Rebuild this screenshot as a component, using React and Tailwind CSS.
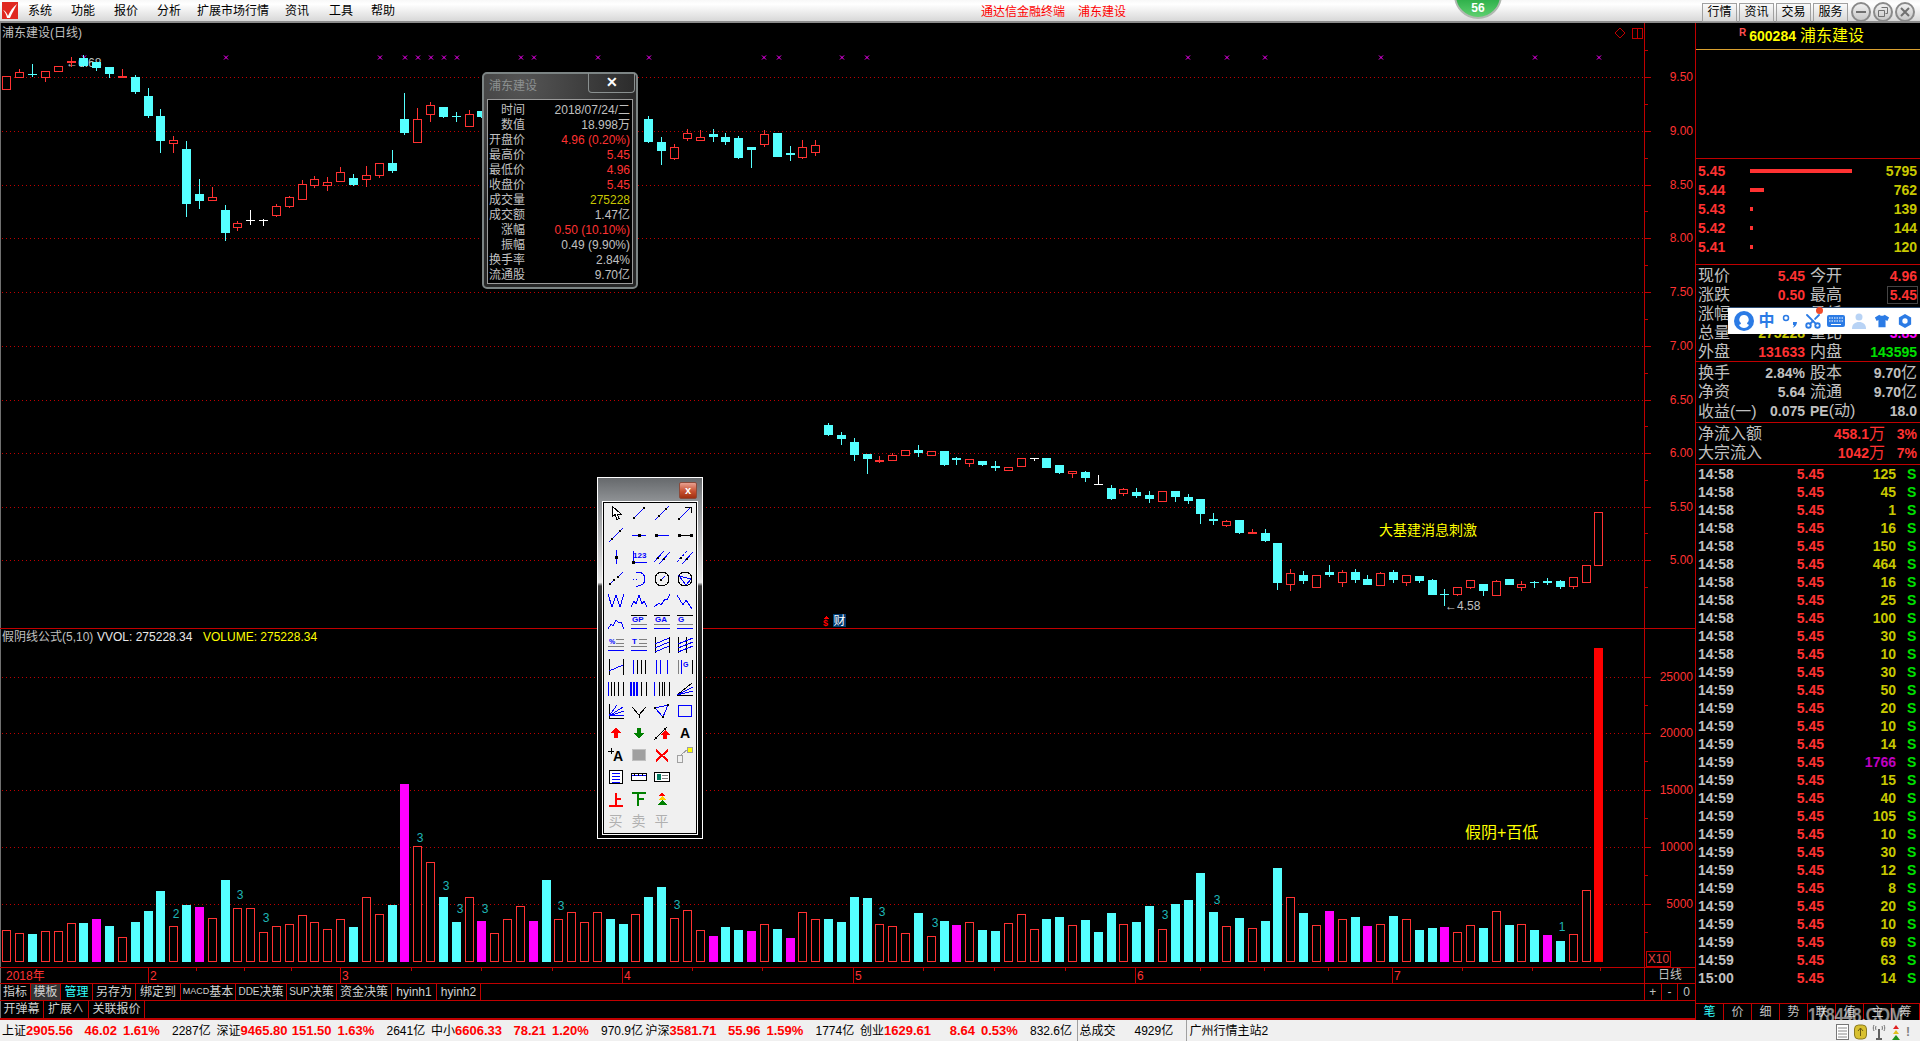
import React from 'react';
import { Scissors } from 'lucide-react';

const RED = '#ff3232';
const CYAN = '#55ffff';
const MAG = '#ff00ff';
const LINE = '#c00000';
const GRAY = '#c0c0c0';
const YEL = '#c8c800';

// candle raw: [type, hi, top, bottom, lo], zoom pixels (y / 3 + offset)
const raw1 = [
  ['r', 229, 229, 266, 266], ['r', 208, 215, 230, 230], ['c', 193, 222, 226, 230], ['r', 212, 212, 230, 245], ['r', 199, 199, 212, 212],
  ['f', 172, 183, 188, 200], ['c', 165, 175, 197, 200], ['c', 186, 186, 204, 212], ['c', 201, 201, 221, 234], ['f', 208, 229, 233, 234],
  ['c', 226, 231, 275, 282], ['c', 264, 288, 348, 353], ['c', 327, 348, 423, 458], ['r', 408, 420, 428, 458], ['c', 423, 447, 611, 650],
  ['c', 537, 582, 602, 627], ['r', 561, 592, 601, 601], ['c', 616, 630, 698, 722], ['r', 663, 669, 682, 692], ['w', 630, 660, 662, 674],
  ['w', 658, 660, 662, 678], ['r', 612, 619, 644, 651], ['r', 587, 592, 617, 623], ['r', 541, 553, 598, 598], ['r', 528, 538, 556, 563],
  ['r', 532, 547, 556, 572], ['r', 501, 517, 544, 544], ['c', 522, 535, 554, 557], ['r', 497, 524, 538, 560], ['r', 490, 490, 524, 533],
  ['c', 450, 490, 513, 519], ['c', 279, 357, 399, 405], ['r', 324, 358, 425, 425], ['r', 306, 314, 343, 365], ['c', 322, 322, 351, 354],
  ['c', 336, 348, 352, 365], ['r', 330, 341, 377, 381], ['c', 334, 334, 352, 354],
];

// after the info box, already in page pixels
const raw2 = [
  ['c', 116, 119, 142, 143], ['c', 137, 142, 151, 165], ['r', 144, 147, 158, 160], ['r', 129, 133, 138, 141], ['r', 130, 137, 140, 141],
  ['c', 129, 134, 137, 142], ['c', 133, 137, 142, 145], ['c', 136, 138, 158, 159], ['c', 147, 147, 150, 168], ['r', 130, 134, 144, 147],
  ['c', 133, 133, 157, 157], ['c', 146, 153, 155, 161], ['r', 140, 147, 157, 159], ['r', 140, 145, 152, 156],
];

const raw3 = [
  ['c', 69, 75, 105, 108], ['c', 96, 105, 117, 135], ['c', 113, 126, 165, 183], ['c', 162, 162, 177, 222], ['f', 168, 180, 185, 189],
  ['r', 159, 165, 179, 179], ['r', 151, 151, 164, 167], ['c', 135, 150, 159, 171], ['r', 154, 154, 164, 167], ['c', 153, 153, 195, 198],
  ['c', 170, 174, 179, 195], ['r', 178, 178, 188, 201], ['c', 183, 183, 195, 198], ['c', 183, 198, 203, 213], ['r', 202, 202, 209, 213],
  ['r', 175, 175, 197, 197], ['w', 175, 175, 177, 183], ['c', 174, 174, 204, 204], ['c', 195, 195, 219, 222], ['r', 214, 214, 220, 234],
  ['c', 213, 216, 234, 246], ['w', 225, 252, 254, 254], ['c', 255, 264, 297, 300], ['r', 264, 268, 278, 288], ['c', 264, 276, 288, 294],
  ['c', 273, 285, 297, 309], ['r', 274, 274, 302, 302], ['c', 273, 273, 291, 306], ['c', 282, 291, 303, 312], ['c', 297, 297, 342, 372],
  ['c', 339, 357, 362, 375], ['r', 360, 364, 374, 381], ['c', 360, 360, 399, 402], ['f', 388, 396, 401, 401], ['c', 387, 399, 423, 426],
  ['c', 429, 429, 549, 570], ['r', 507, 520, 551, 573], ['c', 513, 525, 543, 552], ['r', 526, 526, 560, 560], ['c', 495, 516, 525, 531],
  ['r', 510, 517, 545, 561], ['c', 507, 516, 540, 549], ['c', 525, 537, 555, 555], ['r', 516, 520, 554, 554], ['c', 510, 516, 540, 549],
  ['r', 526, 526, 545, 558], ['c', 528, 528, 543, 549], ['c', 537, 540, 585, 585], ['c', 567, 582, 585, 618], ['r', 562, 562, 581, 588],
  ['r', 541, 541, 560, 567], ['c', 552, 552, 573, 588], ['r', 540, 544, 584, 584], ['c', 537, 537, 555, 555], ['r', 544, 553, 560, 573],
  ['c', 543, 546, 550, 564], ['c', 534, 543, 549, 555], ['c', 540, 543, 561, 567], ['r', 532, 532, 557, 567], ['r', 494, 496, 545, 545],
  ['r', 337, 337, 494, 494],
];

const px = (arr, k, off) => arr.map(([t, a, b, c, d]) => [t, Math.round(a / k + off), Math.round(b / k + off), Math.round(c / k + off), Math.round(d / k + off)]);
const candleAt = (i) => Math.round(6.3 + 12.84 * i);

const candles = [
  ...px(raw1, 3, 0).map((c, i) => ({ i, c })),
  ...px(raw2, 1, 0).map((c, i) => ({ i: i + 50, c })),
  ...px(raw3, 3, 400).map((c, i) => ({ i: i + 64, c })),
];

const vol1 = 'r931 r940 c942 r934 r934 r910 c909 m897 c918 r952 c906 c873 c813 r919 c855 m861 r895 c780 r865 r865 r937 r919 r913 r886 r907 r928 r898 c921 r832 r883 c855 m492 r679 r727 c831 c906 r832 m903 r940 r898 r859 m903 c780 r898'.split(' ');
const vol2 = 'r912 r922 r912 c919 c924 r914 c897 c887 r918 r910 r930 m936 c927 c930 m931 r924 c929 m938'.split(' ');
const vol3 = 'r817 r838 c837 c846 c771 c774 r853 r859 r880 c819 r889 c843 m855 r847 c870 c873 r850 r823 r868 c837 c831 r856 c840 c876 c819 r853 c846 c798 r868 c792 c780 c699 c816 r859 c834 r865 c843 c684 r772 c819 r856 m813 r838 c831 m858 r853 c828 r838 c870 c864 m861 r877 r856 c864 r814 c855 r853 c870 m885 c903 r883 r751 s24'.split(' ');
const volumes = [
  ...vol1.map((s) => [s[0], Math.round(+s.slice(1) / 3 + 620)]),
  ...vol2.map((s) => [s[0], +s.slice(1)]),
  ...vol3.map((s) => [s[0], Math.round(+s.slice(1) / 3 + 640)]),
];

const volMarks = [
  [176, 914, '2'], [240, 895, '3'], [266, 918, '3'], [420, 838, '3'], [446, 886, '3'], [460, 909, '3'], [485, 909, '3'], [561, 906, '3'],
  [677, 905, '3'], [882, 912, '3'], [935, 923, '3'], [1165, 915, '3'], [1217, 900, '3'], [1562, 927, '1'],
];

const crosses = [84, 226, 380, 405, 418, 431, 444, 457, 521, 534, 598, 649, 764, 779, 842, 867, 1188, 1227, 1265, 1381, 1535, 1599];
const priceLevels = [[77, '9.50'], [131, '9.00'], [185, '8.50'], [238, '8.00'], [292, '7.50'], [346, '7.00'], [400, '6.50'], [453, '6.00'], [507, '5.50'], [560, '5.00']];
const volLevels = [[677, '25000'], [733, '20000'], [790, '15000'], [847, '10000'], [904, '5000']];

const sans = "'Liberation Sans', 'Noto Sans CJK SC', sans-serif";

const Candle = ({ i, c }) => {
  const [t, hi, top, bot, lo] = c;
  const x = candleAt(i);
  const col = t === 'c' ? CYAN : t === 'w' ? '#ffffff' : RED;
  return (
    <g>
      {hi < top && <rect x={x} y={hi} width="1" height={top - hi} fill={col} />}
      {lo > bot && <rect x={x} y={bot} width="1" height={lo - bot} fill={col} />}
      {t === 'r' ? (
        <rect x={x - 3.5} y={top + 0.5} width="8" height={Math.max(bot - top, 1)} fill="#000" stroke={col} />
      ) : (
        <rect x={x - 4} y={top} width="9" height={Math.max(bot - top, 1)} fill={col} />
      )}
    </g>
  );
};

const PriceChart = () => (
  <svg width="1644" height="605" viewBox="0 23 1644 605" shapeRendering="crispEdges" className="block shrink-0">
    {priceLevels.map(([y]) => (
      <line key={y} x1="2" x2="1644" y1={y + 0.5} y2={y + 0.5} stroke={LINE} strokeDasharray="1 3" />
    ))}
    {crosses.map((x) => (
      <path key={x} d={`M${x - 2} 55.5l4 4M${x + 2} 55.5l-4 4`} stroke="#ff00ff" fill="none" shapeRendering="auto" />
    ))}
    <text x="66" y="67" fontSize="12" fill={GRAY} fontFamily={sans}>←6.68</text>
    {candles.map(({ i, c }) => <Candle key={i} i={i} c={c} />)}
    <text x="2" y="37" fontSize="12" fill={GRAY} fontFamily={sans}>浦东建设(日线)</text>
    <text x="1379" y="535" fontSize="14" fill="#ffff00" fontFamily={sans}>大基建消息刺激</text>
    <text x="1445" y="610" fontSize="12" fill={GRAY} fontFamily={sans}>←4.58</text>
    <path d="M1620 28l5 5-5 5-5-5z" fill="none" stroke="#c00000" shapeRendering="auto" />
    <rect x="1632.5" y="28.5" width="10" height="10" fill="none" stroke="#c00000" />
    <rect x="1637" y="28" width="1" height="10" fill="#c00000" />
    <path d="M826 616l-3 3h6z" fill="#ff0000" />
    <text x="823" y="626" fontSize="9" fontWeight="700" fill="#ff0000" fontFamily={sans}>$</text>
    <rect x="833" y="614" width="13" height="13" fill="#003a70" />
    <text x="833.5" y="625" fontSize="12" fill="#ffffff" fontFamily={sans}>财</text>
  </svg>
);

const PriceAxis = () => (
  <svg width="50" height="605" viewBox="0 23 50 605" shapeRendering="crispEdges" className="block">
    {priceLevels.map(([y, t]) => (
      <g key={y}>
        <rect x="0" y={y} width="6" height="1" fill={LINE} />
        <rect x="0" y={y - 27} width="3" height="1" fill={LINE} />
        <text x="48" y={y + 4} fontSize="12" textAnchor="end" fill={RED} fontFamily={sans}>{t}</text>
      </g>
    ))}
    <rect x="0" y="587" width="3" height="1" fill={LINE} />
  </svg>
);

const VolumeChart = () => (
  <svg width="1644" height="338" viewBox="0 629 1644 338" shapeRendering="crispEdges" className="block shrink-0">
    {volLevels.map(([y]) => (
      <line key={y} x1="2" x2="1644" y1={y + 0.5} y2={y + 0.5} stroke={LINE} strokeDasharray="1 3" />
    ))}
    {volumes.map(([t, top], i) => {
      const x = candleAt(i);
      if (t === 'r') return <rect key={i} x={x - 3.5} y={top + 0.5} width="8" height={961.5 - top - 0.5} fill="#000" stroke={RED} />;
      const col = t === 'c' ? CYAN : t === 'm' ? MAG : '#ff0000';
      const y = t === 's' ? 648 : top;
      return <rect key={i} x={x - 4} y={y} width="9" height={962 - y} fill={col} />;
    })}
    {volMarks.map(([x, y, t]) => (
      <text key={x} x={x} y={y + 4} fontSize="12" textAnchor="middle" fill="#1fb5b5" fontFamily={sans}>{t}</text>
    ))}
    <text x="2" y="641" fontSize="12" fill={GRAY} fontFamily={sans}>假阴线公式(5,10)</text>
    <text x="97" y="641" fontSize="12" fill="#e8e8e8" fontFamily={sans}>VVOL: 275228.34</text>
    <text x="203" y="641" fontSize="12" fill="#ffff00" fontFamily={sans}>VOLUME: 275228.34</text>
    <text x="1465" y="838" fontSize="16" fill="#ffff00" fontFamily={sans}>假阴+百低</text>
  </svg>
);

const VolumeAxis = () => (
  <div className="relative w-[50px] h-[338px]">
    <svg width="50" height="338" viewBox="0 629 50 338" shapeRendering="crispEdges" className="block">
      {volLevels.map(([y, t]) => (
        <g key={y}>
          <rect x="0" y={y} width="6" height="1" fill={LINE} />
          <rect x="0" y={y + 28} width="3" height="1" fill={LINE} />
          <text x="48" y={y + 4} fontSize="12" textAnchor="end" fill={RED} fontFamily={sans}>{t}</text>
        </g>
      ))}
    </svg>
    <div className="absolute left-[1px] bottom-0 w-[25px] h-[16px] border border-[#c00000] text-[12px] leading-[14px] text-[#e04040] text-center">X10</div>
  </div>
);

const majorTicks = [[148, '2'], [340, '3'], [622, '4'], [853, '5'], [1135, '6'], [1392, '7']];
const minorTicks = [196, 244, 291, 411, 481, 552, 692, 762, 923, 994, 1065, 1200, 1264, 1328, 1462, 1532, 1600];

const TimeAxis = () => (
  <svg width="1644" height="15" viewBox="0 0 1644 15" shapeRendering="crispEdges" className="block shrink-0">
    <text x="6" y="12" fontSize="12" fill={RED} fontFamily={sans}>2018年</text>
    {majorTicks.map(([x, t]) => (
      <g key={x}>
        <rect x={x} y="0" width="1" height="15" fill={LINE} />
        <text x={x + 2} y="12" fontSize="12" fill={RED} fontFamily={sans}>{t}</text>
      </g>
    ))}
    {minorTicks.map((x) => <rect key={x} x={x} y="0" width="1" height="3" fill={LINE} />)}
  </svg>
);

const toolsRow1 = [
  { w: 'w-[31px]', t: '指标' },
  { w: 'w-[30px]', t: '模板', bg: 'bg-[#333333]' },
  { w: 'w-[32px]', t: '管理', c: 'text-[#33ffff]' },
  { w: 'w-[43px]', t: '另存为' },
  { w: 'w-[45px]', t: '绑定到' },
  { w: 'w-[55px]', t: <><span className="text-[9px]">MACD</span>基本</> },
  { w: 'w-[51px]', t: <><span className="text-[10px]">DDE</span>决策</> },
  { w: 'w-[50px]', t: <><span className="text-[10px]">SUP</span>决策</> },
  { w: 'w-[55px]', t: '资金决策' },
  { w: 'w-[45px]', t: 'hyinh1' },
  { w: 'w-[44px]', t: 'hyinh2' },
];
const toolsRow2 = [
  { w: 'w-[44px]', t: '开弹幕' },
  { w: 'w-[45px]', t: '扩展∧' },
  { w: 'w-[56px]', t: '关联报价' },
];

const ToolCell = ({ w, t, bg, c }) => (
  <div className={`${w} ${bg || ''} ${c || 'text-[#d0d0d0]'} h-full border-r border-[#c00000] flex items-center justify-center text-[12px] leading-none pb-[1px] whitespace-nowrap`}>{t}</div>
);

// drawing palette icons, 18x18
const B = '#0000ff';
const K = '#000000';
const L = ({ a, c = B, w = 1, dash }) => <line x1={a[0]} y1={a[1]} x2={a[2]} y2={a[3]} stroke={c} strokeWidth={w} strokeDasharray={dash} />;
const D = ({ x, y, s = 2 }) => <rect x={x - s / 2} y={y - s / 2} width={s} height={s} fill={K} />;
const TT = ({ x = 2, y = 8, t, c = B, s = 8 }) => <text x={x} y={y} fontSize={s} fontWeight="700" fill={c} fontFamily={sans}>{t}</text>;
const P = ({ d, c = B, w = 1, f = 'none' }) => <path d={d} stroke={c} strokeWidth={w} fill={f} />;

const toolIcons = [
  <P d="M5 2v11l3-2.500 2 5 2-1-2-4.500h4z" c={K} f="#ffffff" />,
  <><L a={[4, 14, 14, 4]} /><D x={4} y={14} /><D x={14} y={4} /></>,
  <><L a={[2, 16, 16, 2]} /><D x={6} y={12} /><D x={13} y={5} /></>,
  <><L a={[3, 15, 15, 3]} /><D x={3} y={15} /><P d="M9 3h6v6" c={K} /></>,
  <><L a={[2, 16, 16, 2]} /><D x={5} y={13} /><D x={13} y={5} /></>,
  <><L a={[2, 9, 16, 9]} /><D x={9} y={9} s={3} /></>,
  <><L a={[3, 9, 16, 9]} /><D x={3} y={9} s={3} /></>,
  <><L a={[3, 9, 15, 9]} c={K} /><D x={3} y={9} s={3} /><D x={15} y={9} s={3} /></>,
  <><L a={[9, 2, 9, 16]} /><D x={9} y={9} s={3} /></>,
  <><TT x={3} y={10} t="123" s={8} /><L a={[3, 14, 17, 14]} /><L a={[3, 3, 3, 14]} /><D x={3} y={14} s={3} /></>,
  <><L a={[1, 14, 11, 3]} /><L a={[6, 16, 17, 4]} /><D x={5} y={10} /><D x={11} y={11} /></>,
  <><L a={[1, 14, 11, 3]} dash="3 1" /><L a={[6, 16, 17, 4]} /><D x={5} y={10} /><D x={11} y={11} /></>,
  <><L a={[2, 15, 7, 10]} /><L a={[11, 7, 16, 2]} /><D x={3} y={14} /><D x={7} y={10} /><D x={11} y={7} /></>,
  <><P d="M6 2h2a7 7 0 0 1 0 14h-2" /><L a={[3, 9, 9, 9]} dash="1 2" /></>,
  <><circle cx="9" cy="9" r="7" stroke={K} fill="none" /><L a={[8, 10, 12, 6]} /><D x={8} y={10} /></>,
  <><circle cx="9" cy="9" r="7" stroke={K} fill="none" /><P d="M3 6l12 3-5 6z" /></>,
  <P d="M1 2l4 13 4-12 4 12 4-13" />,
  <P d="M1 15l3-6 2 3 3-9 3 9 2-3 3 6" />,
  <P d="M1 15l5-4 2 2 4-6 2 1 3-6" />,
  <P d="M1 3l6 10 3-5 6 9" />,
  <P d="M1 15l3-5 2 2 3-6 3 3 2-1 3 7" />,
  <><TT x={2} y={8} t="GP" /><L a={[1, 1, 17, 1]} c={K} /><L a={[1, 10, 17, 10]} c="#808080" /><L a={[1, 14, 17, 14]} /></>,
  <><TT x={2} y={8} t="GA" /><L a={[1, 1, 17, 1]} c={K} /><L a={[1, 10, 17, 10]} c="#808080" /><L a={[1, 14, 17, 14]} /></>,
  <><TT x={2} y={8} t="G" /><L a={[1, 1, 17, 1]} c={K} /><L a={[1, 10, 17, 10]} c="#808080" /><L a={[1, 14, 17, 14]} /></>,
  <><TT x={2} y={8} t="%" s={7} /><L a={[9, 3, 17, 3]} c="#808080" /><L a={[9, 7, 17, 7]} c="#808080" /><L a={[1, 10, 17, 10]} c="#808080" /><L a={[1, 14, 17, 14]} /></>,
  <><TT x={2} y={8} t="T" /><L a={[9, 3, 17, 3]} c="#808080" /><L a={[9, 7, 17, 7]} c="#808080" /><L a={[1, 10, 17, 10]} c="#808080" /><L a={[1, 14, 17, 14]} /></>,
  <><L a={[2, 1, 2, 17]} c={K} /><L a={[16, 1, 16, 17]} c={K} /><L a={[2, 8, 16, 2]} /><L a={[2, 12, 16, 6]} /><L a={[2, 16, 16, 10]} /></>,
  <><L a={[2, 1, 2, 17]} c={K} /><L a={[10, 1, 10, 17]} c={K} /><L a={[2, 8, 17, 2]} /><L a={[2, 12, 17, 6]} /><L a={[2, 16, 17, 10]} /></>,
  <><L a={[2, 1, 2, 17]} c={K} /><L a={[16, 1, 16, 17]} c={K} /><L a={[2, 13, 16, 7]} /></>,
  <><L a={[3, 2, 3, 16]} /><L a={[7, 2, 7, 16]} c={K} /><L a={[11, 2, 11, 16]} c={K} /><L a={[15, 2, 15, 16]} c={K} /></>,
  <><L a={[3, 2, 3, 16]} /><L a={[7, 2, 7, 16]} /><L a={[14, 2, 14, 16]} /></>,
  <><L a={[2, 2, 2, 16]} c="#808080" /><L a={[5, 2, 5, 16]} /><TT x={7} y={9} t="G" s={7} /><L a={[16, 2, 16, 16]} c={K} /></>,
  <><L a={[1, 2, 1, 16]} /><L a={[4, 2, 4, 16]} c={K} /><L a={[7, 2, 7, 16]} c={K} /><L a={[11, 2, 11, 16]} c={K} /><L a={[16, 2, 16, 16]} c={K} /></>,
  <><L a={[1, 2, 1, 16]} w={2} /><L a={[4, 2, 4, 16]} w={2} /><L a={[7, 2, 7, 16]} w={2} /><L a={[11, 2, 11, 16]} c={K} /><L a={[16, 2, 16, 16]} c={K} /></>,
  <><L a={[1, 2, 1, 16]} /><L a={[6, 2, 6, 16]} c={K} /><L a={[9, 2, 9, 16]} c={K} /><L a={[11, 2, 11, 16]} c={K} /><L a={[16, 2, 16, 16]} c={K} /></>,
  <><L a={[1, 15, 16, 3]} c={K} /><L a={[1, 15, 17, 15]} c={K} /><L a={[1, 15, 17, 7]} /><L a={[1, 15, 17, 11]} /></>,
  <><L a={[2, 2, 2, 16]} c={K} /><L a={[2, 16, 17, 16]} c={K} /><L a={[2, 14, 10, 3]} /><L a={[2, 14, 16, 5]} /><L a={[2, 14, 17, 9]} /><L a={[2, 14, 17, 13]} /></>,
  <P d="M2 5l7 8 7-8M9 13v3" c={K} />,
  <><P d="M2 6l13-3-5 12z" /><D x={2} y={6} /><D x={15} y={3} /><D x={10} y={15} /></>,
  <rect x="2.500" y="3.500" width="13" height="11" fill="none" stroke={B} strokeWidth="1" />,
  <path d="M9 3l5 6h-3v5h-4v-5h-3z" fill="#ff0000" />,
  <path d="M9 15l5-6h-3v-5h-4v5h-3z" fill="#008000" />,
  <><L a={[1, 16, 14, 3]} c={K} /><D x={3} y={14} /><D x={12} y={5} /><path d="M12 6l5 5h-3v4h-4v-4h-3z" fill="#ff0000" /></>,
  <TT x={4} y={14} t="A" c={K} s={14} />,
  <><TT x={6} y={15} t="A" c={K} s={14} /><P d="M4 2v6M1 5h6" c={K} /></>,
  <><rect x="2.500" y="3.500" width="13" height="11" fill="#a0a0a0" stroke="#c0c0c0" /></>,
  <P d="M3 4l12 11M15 4l-12 11" c="#ff0000" w={2} />,
  <><rect x="1.500" y="9.500" width="5" height="7" fill="none" stroke="#a0a0a0" /><L a={[5, 9, 12, 3]} c="#a0a0a0" /><circle cx="14" cy="4" r="3" fill="#ffff00" stroke="#a0a0a0" /></>,
  <><rect x="2.500" y="2.500" width="13" height="13" fill="#ffffff" stroke={K} /><L a={[5, 5, 13, 5]} /><L a={[5, 8, 13, 8]} /><L a={[5, 11, 13, 11]} /><L a={[5, 14, 13, 14]} /></>,
  <><rect x="1.500" y="5.500" width="15" height="7" fill="#ffffff" stroke={K} /><L a={[2, 7, 16, 7]} /><L a={[4, 5, 4, 8]} c={K} /><L a={[8, 5, 8, 8]} c={K} /><L a={[12, 5, 12, 8]} c={K} /></>,
  <><rect x="1.500" y="4.500" width="15" height="9" fill="#ffffff" stroke={K} /><rect x="4" y="6" width="4" height="6" fill="#007a60" /><L a={[9, 7, 15, 7]} c="#808080" /><L a={[9, 10, 15, 10]} c="#808080" /></>,
  null,
  <><L a={[9, 3, 9, 15]} c="#ff0000" w={2} /><L a={[9, 9, 14, 9]} c="#ff0000" w={2} /><L a={[2, 16, 16, 16]} c="#ff0000" w={2} /></>,
  <><L a={[2, 3, 16, 3]} c="#008000" w={2} /><L a={[8, 3, 8, 16]} c="#008000" w={2} /><L a={[8, 9, 14, 9]} c="#008000" w={2} /></>,
  <><path d="M9 2l3 4h-6z" fill="#ff0000" /><path d="M9 6l4 4h-8z" fill="#ffd000" /><path d="M9 10l5 5h-10z" fill="#008000" /></>,
  null,
];

const DrawPalette = () => (
  <div className="absolute left-[597px] top-[477px] w-[106px] h-[362px] border border-white bg-[linear-gradient(180deg,#66696c_0%,#8c8f92_6%,#e6e6e6_29%,#3a3a3a_30%,#111111_60%,#000000_100%)] px-[4px] pt-[4px] pb-[3px] flex flex-col">
    <div className="h-[19px] flex justify-end pr-[1px] shrink-0">
      <div className="w-[18px] h-[17px] rounded-[2px] border border-[#8a4a3a] bg-[linear-gradient(180deg,#e8a090_0%,#c85030_55%,#a03010_100%)] flex items-center justify-center">
        <span className="text-white text-[11px] leading-none font-bold">x</span>
      </div>
    </div>
    <div className="flex-1 border border-white">
      <div className="h-full border border-black bg-[#f0f0f0] relative">
        <div className="grid grid-cols-[repeat(4,23px)] auto-rows-[22px] justify-items-center items-center -mt-px">
          {toolIcons.map((ic, i) => (
            <div key={i} className="w-[18px] h-[18px]">
              {ic && <svg width="18" height="18" viewBox="0 0 18 18" shapeRendering="crispEdges">{ic}</svg>}
            </div>
          ))}
          {['买', '卖', '平'].map((t) => (
            <span key={t} className="text-[14px] leading-[18px] text-[#b0b0b0]">{t}</span>
          ))}
        </div>
      </div>
    </div>
  </div>
);

const infoRows = [
  ['时间', '2018/07/24/二', 'text-[#c0c0c0]'], ['数值', '18.998万', 'text-[#c0c0c0]'], ['开盘价', '4.96 (0.20%)', 'text-[#ff3232]'], ['最高价', '5.45', 'text-[#ff3232]'],
  ['最低价', '4.96', 'text-[#ff3232]'], ['收盘价', '5.45', 'text-[#ff3232]'], ['成交量', '275228', 'text-[#c8c800]'], ['成交额', '1.47亿', 'text-[#c0c0c0]'],
  ['涨幅', '0.50 (10.10%)', 'text-[#ff3232]'], ['振幅', '0.49 (9.90%)', 'text-[#c0c0c0]'], ['换手率', '2.84%', 'text-[#c0c0c0]'], ['流通股', '9.70亿', 'text-[#c0c0c0]'],
];

const InfoBox = () => (
  <div className="absolute left-[482px] top-[72px] w-[156px] h-[217px] rounded-[5px] border-2 border-[#7c8484] bg-[radial-gradient(circle_at_25%_5%,#555555,#262626_55%)] px-[3px] pt-[5px] pb-[3px] flex flex-col">
    <div className="h-[20px] flex justify-between shrink-0">
      <span className="pl-[2px] text-[12px] leading-[14px] text-[#8c9090]">浦东建设</span>
      <div className="w-[47px] h-[20px] -mt-[6px] -mr-[2px] rounded-b-[4px] border border-t-0 border-[#8a9090] flex items-center justify-center text-white text-[14px] font-bold">✕</div>
    </div>
    <div className="flex-1 bg-black border border-[#9a9a9a] pt-[3px] pr-[2px]">
      {infoRows.map(([k, v, col]) => (
        <div key={k} className="h-[15px] flex items-center text-[12px] leading-[15px]">
          <span className="w-[37px] text-right text-[#c0c0c0] shrink-0">{k}</span>
          <span className={`flex-1 text-right whitespace-pre ${col}`}>{v}</span>
        </div>
      ))}
    </div>
  </div>
);

const ladder = [['5.45', 102, '5795'], ['5.44', 14, '762'], ['5.43', 3, '139'], ['5.42', 3, '144'], ['5.41', 3, '120']];

const VAL = 'font-bold text-[14px] leading-none';

const QuoteRow = ({ a, av, ac = 'text-[#ff3232]', b, bv, bc = 'text-[#ff3232]', boxed }) => (
  <div className="h-[19px] grid grid-cols-2 gap-[5px] items-center">
    <div className="flex justify-between items-center">
      <span className="text-[16px] leading-[19px] text-[#c0c0c0] whitespace-nowrap">{a}</span>
      <span className={`${VAL} ${ac}`}>{av}</span>
    </div>
    <div className="flex justify-between items-center">
      <span className="text-[16px] leading-[19px] text-[#c0c0c0] whitespace-nowrap">{b}</span>
      <span className={`${VAL} ${bc} ${boxed ? 'relative' : ''}`}>
        {bv}
        {boxed && <span className="absolute -left-[3px] -top-[2px] w-[31px] h-[18px] border border-[#444444]" />}
      </span>
    </div>
  </div>
);

const trades = [
  ['14:58', '125'], ['14:58', '45'], ['14:58', '1'], ['14:58', '16'], ['14:58', '150'], ['14:58', '464'], ['14:58', '16'], ['14:58', '25'], ['14:58', '100'], ['14:58', '30'], ['14:58', '10'],
  ['14:59', '30'], ['14:59', '50'], ['14:59', '20'], ['14:59', '10'], ['14:59', '14'], ['14:59', '1766'], ['14:59', '15'], ['14:59', '40'], ['14:59', '105'], ['14:59', '10'], ['14:59', '30'],
  ['14:59', '12'], ['14:59', '8'], ['14:59', '20'], ['14:59', '10'], ['14:59', '69'], ['14:59', '63'], ['15:00', '14'],
];

const tabs = ['笔', '价', '细', '势', '联', '值', '主', '筹'];

const RightPanel = () => (
  <div className="w-[225px] border-l border-[#c00000] flex flex-col h-full">
    <div className="h-[27px] border-b border-[#d9a030] flex items-center pl-[43px] shrink-0">
      <span className="text-[10px] font-bold text-[#ff5050] mr-[3px] -mt-[8px]">R</span>
      <span className="text-[14px] font-bold text-[#ffff00] mr-[4px]">600284</span>
      <span className="text-[16px] text-[#ffff00]">浦东建设</span>
    </div>
    <div className="h-[109px] border-b border-[#c00000] shrink-0" />
    <div className="h-[106px] border-b border-[#c00000] pt-[2px] pl-[2px] pr-[3px] shrink-0">
      {ladder.map(([p, w, q]) => (
        <div key={p} className="h-[19px] flex items-center">
          <span className={`${VAL} text-[#ff3232] w-[52px]`}>{p}</span>
          <div className="flex-1">
            <div className="h-[4px] bg-[#ff3232]" style={{ width: w }} />
          </div>
          <span className={`${VAL} text-[#c8c800]`}>{q}</span>
        </div>
      ))}
    </div>
    <div className="h-[97px] border-b border-[#c00000] pt-px pl-[2px] pr-[3px] shrink-0">
      <QuoteRow a="现价" av="5.45" b="今开" bv="4.96" />
      <QuoteRow a="涨跌" av="0.50" b="最高" bv="5.45" boxed />
      <QuoteRow a="涨幅" av="10.10%" b="最低" bv="4.96" />
      <QuoteRow a="总量" av="275228" ac="text-[#c8c800]" b="量比" bv="3.85" bc="text-[#ff00ff]" />
      <QuoteRow a="外盘" av="131633" b="内盘" bv="143595" bc="text-[#00e000]" />
    </div>
    <div className="h-[61px] border-b border-[#c00000] pt-px pl-[2px] pr-[3px] shrink-0">
      <QuoteRow a="换手" av="2.84%" ac="text-[#c0c0c0]" b="股本" bv={<>9.70<span className="text-[16px] font-normal">亿</span></>} bc="text-[#c0c0c0]" />
      <QuoteRow a="净资" av="5.64" ac="text-[#c0c0c0]" b="流通" bv={<>9.70<span className="text-[16px] font-normal">亿</span></>} bc="text-[#c0c0c0]" />
      <QuoteRow a="收益(一)" av="0.075" ac="text-[#c0c0c0]" b={<span className="font-bold text-[14px]">PE<span className="font-normal text-[16px]">(动)</span></span>} bv="18.0" bc="text-[#c0c0c0]" />
    </div>
    <div className="h-[42px] border-b border-[#c00000] pt-px pl-[2px] pr-[3px] shrink-0">
      {[['净流入额', '458.1', '3%'], ['大宗流入', '1042', '7%']].map(([k, v, p]) => (
        <div key={k} className="h-[19px] flex items-center">
          <span className="text-[16px] leading-[19px] text-[#c0c0c0] flex-1">{k}</span>
          <span className={`${VAL} text-[#ff3232]`}>{v}<span className="text-[16px] font-normal">万</span></span>
          <span className={`${VAL} text-[#ff3232] w-[32px] text-right`}>{p}</span>
        </div>
      ))}
    </div>
    <div className="flex-1 min-h-0">
      {trades.map(([t, q], i) => (
        <div key={i} className={`${VAL} h-[18px] grid grid-cols-[40px_86px_72px_11px_8px] items-center pl-[2px] -mt-0`}>
          <span className="text-[#c0c0c0]">{t}</span>
          <span className="text-[#ff3232] text-right">5.45</span>
          <span className={`text-right ${q === '1766' ? 'text-[#c000c0]' : 'text-[#c8c800]'}`}>{q}</span>
          <span />
          <span className="text-[#00e000]">S</span>
        </div>
      ))}
    </div>
    <div className="h-[17px] border-t border-[#c00000] grid grid-cols-8 shrink-0 relative">
      {tabs.map((t, i) => (
        <div key={t} className={`border-r border-[#c00000] text-[12px] leading-[16px] text-center ${i === 0 ? 'text-[#33ffff]' : 'text-[#c0c0c0]'}`}>{t}</div>
      ))}
      <div className="absolute left-[112px] top-[2px] text-[16px] font-bold text-white/55 scale-y-125 leading-[20px] whitespace-nowrap">178448.COM</div>
    </div>
  </div>
);

const ImeCell = ({ children }) => <div className="relative w-[23px] h-[20px] flex items-center justify-center shrink-0">{children}</div>;

const ImeBar = () => (
  <div className="absolute left-[1728px] top-[307px] w-[192px] h-[27px] bg-white border-t border-[#2a4a70] flex items-center pl-[4px]">
    <ImeCell>
      <svg width="20" height="20" viewBox="0 0 20 20">
        <circle cx="10" cy="10" r="10" fill="#2b7be5" />
        <path d="M10 4a4.500 4.500 0 0 0-3 8c0 1-1 1.500-2 2 1 2 3 3 5 3s4-1 5-3c-1-.5-2-1-2-2a4.500 4.500 0 0 0-3-8z" fill="#ffffff" />
      </svg>
    </ImeCell>
    <ImeCell><span className="text-[16px] font-bold leading-none text-[#2b7be5]">中</span></ImeCell>
    <ImeCell>
      <svg width="20" height="20" viewBox="0 0 20 20">
        <circle cx="6" cy="7" r="2.500" fill="none" stroke="#2b7be5" strokeWidth="1.500" />
        <path d="M13 11h4c0 3-2 5-4.500 6 1-1 1.500-2.500 1.500-3h-1z" fill="#2b7be5" />
      </svg>
    </ImeCell>
    <ImeCell>
      <Scissors size={18} color="#2b7be5" strokeWidth={2.5} className="-rotate-90" />
      <span className="absolute right-[1px] top-[-4px] w-[7px] h-[7px] rounded-full bg-[#f04a2a]" />
    </ImeCell>
    <ImeCell>
      <svg width="18" height="14" viewBox="0 0 18 14">
        <rect x="0" y="1" width="18" height="12" rx="2" fill="#2b7be5" />
        <path d="M2 4h14M2 7h14" stroke="#ffffff" strokeDasharray="1.500 1" />
        <path d="M4 10.500h10" stroke="#ffffff" />
      </svg>
    </ImeCell>
    <ImeCell>
      <svg width="14" height="16" viewBox="0 0 14 16">
        <circle cx="7" cy="4" r="3.500" fill="#b8d3f5" />
        <path d="M0 16c0-5 3-7 7-7s7 2 7 7z" fill="#b8d3f5" />
      </svg>
    </ImeCell>
    <ImeCell>
      <svg width="16" height="16" viewBox="0 0 18 18">
        <path d="M6 2L1 5l2 4 2-1v8h8V8l2 1 2-4-5-3c-1 1.500-5 1.500-6 0z" fill="#2b7be5" />
      </svg>
    </ImeCell>
    <ImeCell>
      <svg width="16" height="16" viewBox="0 0 18 18">
        <path d="M9 1l6.900 4v8L9 17l-6.900-4V5z" fill="#2b7be5" />
        <circle cx="9" cy="9" r="3" fill="#ffffff" />
      </svg>
    </ImeCell>
  </div>
);

const menus = [
  ['系统', 'w-[24px] ml-[10px]'], ['功能', 'w-[24px] ml-[19px]'], ['报价', 'w-[24px] ml-[19px]'], ['分析', 'w-[24px] ml-[19px]'],
  ['扩展市场行情', 'w-[72px] ml-[16px]'], ['资讯', 'w-[24px] ml-[16px]'], ['工具', 'w-[24px] ml-[20px]'], ['帮助', 'w-[24px] ml-[18px]'],
];

const TitleBar = () => (
  <div className="relative h-[23px] shrink-0 border-b-2 border-[#8c8c8c] bg-[linear-gradient(180deg,#f8f8f8_0%,#ffffff_20%,#d8d8d8_100%)] flex items-center text-[12px] text-black">
    <svg width="16" height="17" viewBox="0 0 16 17" className="ml-[2px] shrink-0">
      <rect width="16" height="17" fill="#e02820" />
      <path d="M1 8c3 1 4 4 5 6 2-5 5-9 9-12-2 4-5 9-7 14H5C4 12 3 10 1 8z" fill="#ffffff" />
    </svg>
    {menus.map(([t, c]) => <span key={t} className={`${c} whitespace-nowrap`}>{t}</span>)}
    <div className="absolute left-[981px] top-[3px] text-[#ff0000] whitespace-nowrap">通达信金融终端</div>
    <div className="absolute left-[1078px] top-[3px] text-[#ff0000] whitespace-nowrap">浦东建设</div>
    <div className="absolute left-[1454px] -top-[29px] w-[48px] h-[48px] rounded-full bg-[linear-gradient(180deg,#2fb04a_60%,#5fd070_100%)] border-2 border-[#b0b8b0] flex items-end justify-center pb-[1px]">
      <span className="text-white text-[12px] font-bold leading-[16px]">56</span>
    </div>
    <div className="absolute left-[1702px] top-[2px] flex items-center">
      {['行情', '资讯', '交易', '服务'].map((t) => (
        <div key={t} className="w-[35px] h-[19px] mr-[2px] border border-[#a0a0a0] bg-[linear-gradient(180deg,#fafafa,#d8d8d8)] flex items-center justify-center">{t}</div>
      ))}
      <div className="w-[20px] h-[20px] ml-[1px] rounded-full border-2 border-[#8a8a8a] bg-[linear-gradient(180deg,#f0f0f0,#c8c8c8)] flex items-center justify-center">
        <span className="w-[10px] h-[2px] bg-[#707070]" />
      </div>
      <div className="w-[20px] h-[20px] ml-[2px] rounded-full border-2 border-[#8a8a8a] bg-[linear-gradient(180deg,#f0f0f0,#c8c8c8)] flex items-center justify-center">
        <svg width="10" height="10" viewBox="0 0 10 10"><path d="M3.500 .500h6v6h-2M.500 3.500h6v6h-6z" fill="none" stroke="#707070" /></svg>
      </div>
      <div className="w-[20px] h-[20px] ml-[2px] rounded-full border-2 border-[#8a8a8a] bg-[linear-gradient(180deg,#f0f0f0,#c8c8c8)] flex items-center justify-center">
        <svg width="10" height="10" viewBox="0 0 10 10"><path d="M1 1l8 8M9 1l-8 8" stroke="#707070" strokeWidth="2" /></svg>
      </div>
    </div>
  </div>
);

const indexes = [
  ['上证', '2905.56', '46.02', '1.61%', '2287亿'],
  ['深证', '9465.80', '151.50', '1.63%', '2641亿'],
  ['中小', '6606.33', '78.21', '1.20%', '970.9亿'],
  ['沪深', '3581.71', '55.96', '1.59%', '1774亿'],
  ['创业', '1629.61', '8.64', '0.53%', '832.6亿'],
];

const StatusBar = () => (
  <div className="h-[21px] shrink-0 bg-[#f0f0f0] flex items-center text-[12px] text-black pl-[2px] relative">
    {indexes.map(([n, p, d, pc, a]) => (
      <div key={n} className="w-[214.500px] shrink-0 grid grid-cols-[24px_51px_40px_55px_auto] items-center whitespace-nowrap">
        <span>{n}</span>
        <span className="text-[#ff0000] font-bold text-[13px]">{p}</span>
        <span className="text-[#ff0000] font-bold text-[13px] text-right">{d}</span>
        <span className="text-[#ff0000] font-bold text-[13px] pl-[6px]">{pc}</span>
        <span>{a}</span>
      </div>
    ))}
    <div className="h-full border-l border-[#a0a0a0] ml-[2px] flex items-center pl-[2px] w-[109px] shrink-0">
      <span className="w-[55px]">总成交</span>
      <span>4929亿</span>
    </div>
    <div className="h-full border-l border-[#a0a0a0] flex items-center pl-[3px] whitespace-nowrap">广州行情主站2</div>
    <div className="absolute left-[1836px] top-[4px] flex items-center gap-[5px]">
      <svg width="13" height="16" viewBox="0 0 13 16">
        <rect x=".5" y=".5" width="12" height="15" fill="#ffffff" stroke="#777777" />
        <path d="M2 4h9M2 7h9M2 10h9M2 13h9" stroke="#888888" />
      </svg>
      <svg width="13" height="16" viewBox="0 0 13 16">
        <rect x=".5" y="1" width="12" height="14" rx="4" fill="#d8c030" stroke="#8a7a20" />
        <path d="M6.500 4v8M4 7l2.500-3 2.500 3" stroke="#6a5a10" fill="none" />
      </svg>
      <svg width="14" height="16" viewBox="0 0 14 16">
        <path d="M7 5v10M4 15h6" stroke="#606060" strokeWidth="2" />
        <path d="M2 1c-1 2-1 4 0 6M12 1c1 2 1 4 0 6M4 2c-.5 1-.5 3 0 4M10 2c.5 1 .5 3 0 4" stroke="#707070" fill="none" />
      </svg>
      <svg width="10" height="15" viewBox="0 0 10 15">
        <path d="M5 0l3 4H2z" fill="#e02020" />
        <path d="M5 5l3 4H2z" fill="#e0c020" />
        <path d="M5 10l4 5H1z" fill="#209020" />
      </svg>
      <span className="text-[#808080] font-bold text-[12px] leading-none">!</span>
    </div>
  </div>
);

const App = () => (
  <div className="relative w-[1920px] h-[1041px] bg-black overflow-hidden flex flex-col font-['Liberation_Sans','Noto_Sans_CJK_SC',sans-serif]">
    <TitleBar />
    <div className="flex flex-1 min-h-0">
      <div className="w-[1695px] border-l border-[#707070] flex flex-col">
        <div className="h-[606px] border-b border-[#c00000] flex -ml-px">
          <PriceChart />
          <div className="border-l border-[#c00000]"><PriceAxis /></div>
        </div>
        <div className="h-[339px] border-b border-[#c00000] flex -ml-px">
          <VolumeChart />
          <div className="border-l border-[#c00000]"><VolumeAxis /></div>
        </div>
        <div className="h-[16px] border-b border-[#c00000] flex -ml-px">
          <TimeAxis />
          <div className="flex-1 border-l border-[#c00000] text-[12px] leading-[15px] text-[#c0c0c0] text-center">日线</div>
        </div>
        <div className="h-[17px] border-b border-[#c00000] flex -ml-px">
          <div className="w-[1644px] flex shrink-0">
            {toolsRow1.map((c, i) => <ToolCell key={i} {...c} />)}
          </div>
          <div className="flex-1 border-l border-[#c00000] grid grid-cols-3 text-[12px] leading-[16px] text-[#c0c0c0] text-center">
            <span className="border-r border-[#c00000]">+</span>
            <span className="border-r border-[#c00000]">-</span>
            <span>0</span>
          </div>
        </div>
        <div className="h-[19px] border-b-2 border-[#c00000] flex -ml-px">
          {toolsRow2.map((c, i) => <ToolCell key={i} {...c} />)}
        </div>
      </div>
      <RightPanel />
    </div>
    <StatusBar />
    <InfoBox />
    <DrawPalette />
    <ImeBar />
  </div>
);

export default App;
